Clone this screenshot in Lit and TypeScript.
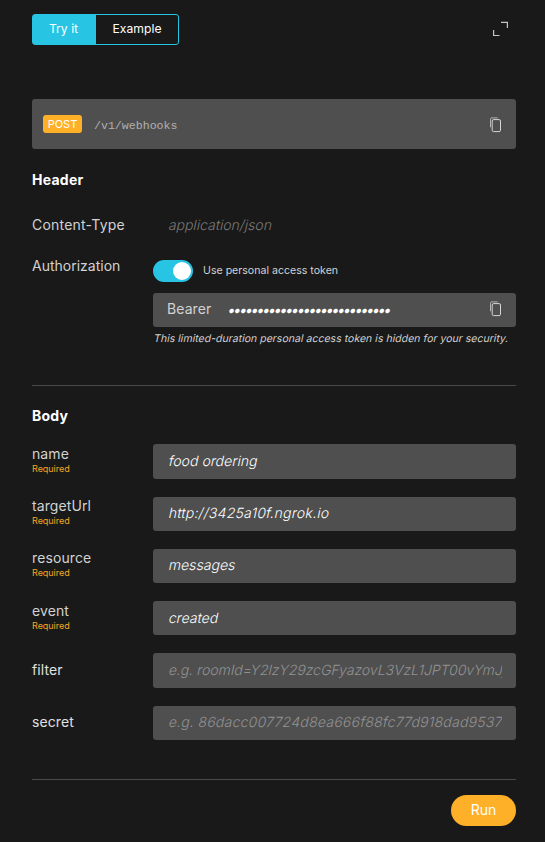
import { LitElement, html, css, nothing } from "lit";
import { customElement, property } from "lit/decorators.js";
import { styleMap } from "lit/directives/style-map.js";

interface Field {
  name: string;
  required: boolean;
  value?: string;
  placeholder?: string;
  tracking: number;
}

const FIELDS: Field[] = [
  { name: "name", required: true, value: "food ordering", tracking: 0.05 },
  { name: "targetUrl", required: true, value: "http://3425a10f.ngrok.io", tracking: 0.25 },
  { name: "resource", required: true, value: "messages", tracking: 0.05 },
  { name: "event", required: true, value: "created", tracking: 0.05 },
  { name: "filter", required: false, placeholder: "e.g. roomId=Y2lzY29zcGFyazovL3VzL1JPT00vYmJj", tracking: 0 },
  { name: "secret", required: false, placeholder: "e.g. 86dacc007724d8ea666f88fc77d918dad9537", tracking: 0.25 },
];

/* Slants the upright face, which keeps its two-storey "a". */
const slanted = css`
  .slant { display: inline-block; transform: skewX(-12deg); white-space: nowrap; }
`;

@customElement("copy-icon")
export class CopyIcon extends LitElement {
  static styles = css`
    :host { display: block; width: 12px; height: 16px; }
    svg { display: block; }
    path, rect { fill: none; stroke: #d6d6d6; stroke-width: 1; }
    .back { stroke: #b4b4b4; }
  `;
  render() {
    return html`<svg width="12" height="16" viewBox="0 0 12 16">
      <path class="back" d="M0.5 10.3V2.2Q0.5 0.9 2 0.9H7.6" />
      <rect x="2.2" y="2.6" width="8.3" height="12" rx="1.4" />
    </svg>`;
  }
}

@customElement("body-field")
export class BodyField extends LitElement {
  @property({ attribute: false }) field!: Field;
  static styles = [slanted, css`
    :host { display: flex; height: 34.3px; }
    .label { width: 121px; flex: none; margin-top: -0.4px; color: #d2d2d2; font-size: 14px; line-height: 20px; letter-spacing: 0.1px; }
    .label.single { margin-top: -0.3px; line-height: 34px; color: #e0e0e0; }
    .required { display: block; color: #f5a623; font-size: 9px; line-height: 10px; letter-spacing: -0.03px; }
    .box { flex: 1; min-width: 0; box-sizing: border-box; border-radius: 3px; background: #4f4f4f; padding: 0 14px 0 15px; }
    .value { overflow: hidden; height: 34px; margin-top: -0.4px; padding-left: 1px; white-space: nowrap; font-size: 14px; font-weight: 300; line-height: 34px; color: #fff; }
    .hint { color: #929292; }
  `];
  render() {
    const f = this.field;
    return html`
      <div class="label ${f.required ? "" : "single"}">
        ${f.name}${f.required ? html`<span class="required">Required</span>` : nothing}
      </div>
      <div class="box">
        <div class="value ${f.value ? "" : "hint"}" style=${styleMap({ letterSpacing: `${f.tracking}px` })}><span class="slant">${f.value ?? f.placeholder}</span></div>
      </div>
    `;
  }
}

@customElement("app-root")
export class AppRoot extends LitElement {
  static styles = [slanted, css`
    :host {
      display: block; box-sizing: border-box; width: 545px; height: 842px; overflow: hidden;
      padding: 14px 29px 0 32px; background: #191919; color: #d2d2d2;
      font-family: Inter, "Liberation Sans", sans-serif; font-size: 14px;
    }
    .top { display: flex; justify-content: space-between; height: 31px; }
    .tabs { display: flex; box-sizing: border-box; width: 147px; border: 1px solid #28c4e4; border-radius: 3px; color: #fff; font-size: 12.2px; line-height: 28px; text-align: center; }
    .tab { flex: 1; }
    .tab.active { flex: none; box-sizing: border-box; width: 63px; padding-right: 2px; background: #28c4e4; }
    .expand { display: block; margin: 7px 7px 0 0; }
    .expand path { fill: none; stroke: #c4c4c4; stroke-width: 1.2; }
    .endpoint { display: flex; align-items: center; box-sizing: border-box; height: 50px; margin-top: 54px; padding: 0 14px 0 11px; border-radius: 3px; background: #4f4f4f; }
    .endpoint copy-icon { padding-top: 1px; }
    .verb { box-sizing: border-box; width: 39px; height: 18px; border-radius: 3px; background: #ffb029; color: #fff; font-size: 11px; line-height: 18px; text-align: center; }
    .path { flex: 1; margin-left: 12px; padding-top: 2px; color: #b0b0b0; font: 11.6px "Liberation Mono", monospace; }
    .title { color: #fff; font-weight: 700; font-size: 14px; line-height: 20px; letter-spacing: 0.25px; }
    .header-title { margin-top: 21px; }
    .row { display: flex; }
    .key { width: 121px; flex: none; line-height: 20px; }
    .content-type { margin-top: 25px; }
    .content-type .key { letter-spacing: 0.22px; }
    .plain { padding-left: 16px; color: #797979; font-weight: 300; line-height: 20px; letter-spacing: 0.04px; }
    .auth { margin-top: 21px; }
    .auth-body { flex: 1; }
    .switch-line { display: flex; align-items: center; gap: 10px; height: 22px; margin-top: 4px; font-size: 10.6px; }
    .switch { display: flex; justify-content: flex-end; align-items: center; box-sizing: border-box; width: 40px; height: 22px; padding-right: 2px; border-radius: 11px; background: #28c4e4; }
    .knob { width: 18px; height: 18px; border-radius: 50%; background: #fff; }
    .switch-text { padding-bottom: 1px; }
    .token { display: flex; align-items: center; box-sizing: border-box; height: 34px; margin-top: 11px; padding: 0 14px 2px 14px; border-radius: 3px; background: #4f4f4f; }
    .bearer { width: 61px; padding-bottom: 1px; letter-spacing: 0.1px; }
    .dots { flex: 1; color: #fff; font-size: 14px; letter-spacing: -2.1px; }
    .note { margin: 4px 0 0 1px; font-size: 10.5px; line-height: 16px; letter-spacing: 0.03px; white-space: nowrap; }
    .rule { height: 1px; background: #494949; }
    .rule.first { margin-top: 38px; }
    .body-title { margin-top: 20px; }
    .fields { display: flex; flex-direction: column; gap: 17.97px; margin-top: 18.34px; }
    .rule.last { margin-top: 39px; }
    .actions { display: flex; justify-content: flex-end; margin-top: 15px; }
    .run { width: 65px; height: 31px; border-radius: 15.5px; background: #ffb029; color: #fff; line-height: 30px; text-align: center; }
  `];

  render() {
    return html`
      <div class="top">
        <div class="tabs"><div class="tab active">Try it</div><div class="tab">Example</div></div>
        <svg class="expand" width="16" height="16" viewBox="0 0 16 16"><path d="M8 1.4H14.4V7M0.6 9V14.5H6.5" /></svg>
      </div>
      <div class="endpoint">
        <div class="verb">POST</div><div class="path">/v1/webhooks</div><copy-icon></copy-icon>
      </div>
      <div class="title header-title">Header</div>
      <div class="row content-type"><div class="key">Content-Type</div><div class="plain"><span class="slant">application/json</span></div></div>
      <div class="row auth">
        <div class="key">Authorization</div>
        <div class="auth-body">
          <div class="switch-line"><div class="switch"><div class="knob"></div></div><span class="switch-text">Use personal access token</span></div>
          <div class="token"><div class="bearer">Bearer</div><div class="dots"><span class="slant">${"•".repeat(28)}</span></div><copy-icon></copy-icon></div>
          <div class="note"><span class="slant">This limited-duration personal access token is hidden for your security.</span></div>
        </div>
      </div>
      <div class="rule first"></div>
      <div class="title body-title">Body</div>
      <div class="fields">${FIELDS.map((f) => html`<body-field .field=${f}></body-field>`)}</div>
      <div class="rule last"></div>
      <div class="actions"><div class="run">Run</div></div>
    `;
  }
}
